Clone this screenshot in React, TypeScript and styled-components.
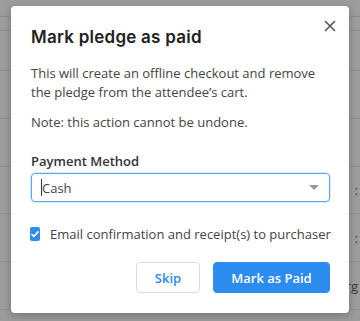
import React from "react";
import styled, { createGlobalStyle } from "styled-components";

const Global = createGlobalStyle`
  html, body { margin: 0; padding: 0; }
  body { width: 360px; height: 321px; overflow: hidden; font-family: "Open Sans", "Noto Sans", sans-serif; }
  * { box-sizing: border-box; }
`;

const Page = styled.div`
  position: relative;
  width: 360px;
  height: 321px;
  background: #9c9c9c;
  overflow: hidden;
`;

const Table = styled.div`
  display: flex;
  flex-direction: column;
  padding-top: 16px;
`;

const Row = styled.div<{ $h: number }>`
  height: ${(p) => p.$h}px;
  border-top: 1px solid #8e8e8e;
  display: flex;
  align-items: center;
  justify-content: flex-end;
  padding-right: 2px;
  font-size: 13px;
  color: #3a3a3a;
`;

const Dialog = styled.div`
  position: absolute;
  left: 11px;
  top: 6px;
  width: 338px;
  height: 307px;
  background: #fff;
  border-radius: 4px;
  box-shadow: 0 3px 8px rgba(0, 0, 0, 0.25);
  padding: 20px 19px 0 20px;
  display: flex;
  flex-direction: column;
`;

const Close = styled.button`
  position: absolute;
  right: 11px;
  top: 12px;
  width: 16px;
  height: 16px;
  padding: 0;
  border: none;
  background: none;
  display: flex;
  align-items: center;
  justify-content: center;
`;

const Title = styled.h2`
  margin: 0;
  font-family: "Inter", "Noto Sans", sans-serif;
  font-weight: 600;
  font-size: 17px;
  line-height: 22px;
  color: #222;
  letter-spacing: 0.25px;
`;

const Para = styled.p<{ $mt: number }>`
  margin: ${(p) => p.$mt}px 0 0;
  font-size: 13px;
  line-height: 19px;
  color: #444;
`;

const Label = styled.div`
  margin-top: 19px;
  font-size: 13px;
  font-weight: 600;
  line-height: 20px;
  color: #333;
`;

const Select = styled.div`
  margin-top: 2px;
  height: 29px;
  border: 1px solid #5aa6f5;
  box-shadow: 0 0 0 1px rgba(90, 166, 245, 0.25);
  border-radius: 4px;
  display: flex;
  align-items: center;
  padding: 0 9px;
  font-size: 13px;
  color: #444;
`;

const Cursor = styled.span`
  display: inline-block;
  width: 1px;
  height: 17px;
  background: #333;
`;

const SelectText = styled.span`
  flex: 1;
`;

const Caret = styled.span`
  width: 0;
  height: 0;
  border-left: 5px solid transparent;
  border-right: 5px solid transparent;
  border-top: 5px solid #999;
  margin-right: 1px;
`;

const CheckRow = styled.label`
  margin-top: 22px;
  display: flex;
  align-items: center;
  gap: 10px;
  font-size: 13px;
  color: #444;
  line-height: 20px;
  white-space: nowrap;
`;

const Box = styled.span`
  width: 14px;
  height: 14px;
  margin-left: -1px;
  border-radius: 2px;
  background: #2d8cf0;
  display: flex;
  align-items: center;
  justify-content: center;
`;

const Actions = styled.div`
  margin-top: 18px;
  display: flex;
  justify-content: flex-end;
  gap: 13px;
`;

const Btn = styled.button<{ $primary?: boolean }>`
  height: 31px;
  padding: 0;
  white-space: nowrap;
  border-radius: 4px;
  font-family: "Open Sans", "Noto Sans", sans-serif;
  font-size: 13px;
  font-weight: 600;
  border: 1px solid ${(p) => (p.$primary ? "#2d8cf0" : "#dcdcdc")};
  background: ${(p) => (p.$primary ? "#2d8cf0" : "#fff")};
  color: ${(p) => (p.$primary ? "#fff" : "#2d8cf0")};
  width: ${(p) => (p.$primary ? 117 : 64)}px;
`;

const rows = [14, 40, 48, 48, 47, 48, 48, 48];
const rowText = ["", "", "", "", ":", ":", "rg", ""];

export default function App() {
  return (
    <>
      <Global />
      <Page>
        <Table>
          {rows.map((h, i) => (
            <Row key={i} $h={h}>
              {rowText[i]}
            </Row>
          ))}
        </Table>
        <Dialog>
          <Close aria-label="Close">
            <svg width="12" height="12" viewBox="0 0 12 12">
              <path d="M1 1L11 11M11 1L1 11" stroke="#555" strokeWidth="1.6" />
            </svg>
          </Close>
          <Title>Mark pledge as paid</Title>
          <Para $mt={16}>
            This will create an offline checkout and remove the pledge from the attendee’s cart.
          </Para>
          <Para $mt={11}>Note: this action cannot be undone.</Para>
          <Label>Payment Method</Label>
          <Select>
            <Cursor />
            <SelectText>Cash</SelectText>
            <Caret />
          </Select>
          <CheckRow>
            <Box>
              <svg width="10" height="8" viewBox="0 0 11 9">
                <path d="M1.5 4.5L4.2 7.2L9.5 1.5" stroke="#fff" strokeWidth="1.8" fill="none" />
              </svg>
            </Box>
            Email confirmation and receipt(s) to purchaser
          </CheckRow>
          <Actions>
            <Btn>Skip</Btn>
            <Btn $primary>Mark as Paid</Btn>
          </Actions>
        </Dialog>
      </Page>
    </>
  );
}
